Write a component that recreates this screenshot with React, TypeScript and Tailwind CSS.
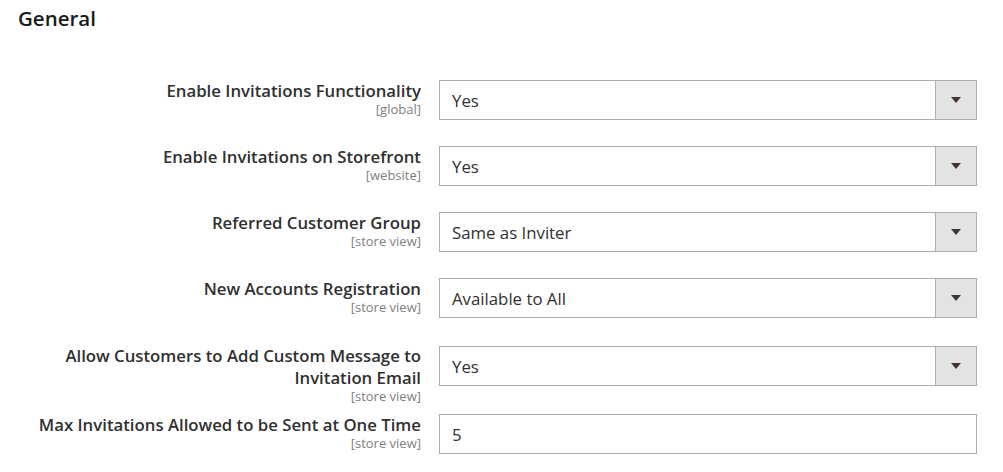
import React from "react";

type Row = { label: string[]; scope: string; value: string; select: boolean; mb: string };

const rows: Row[] = [
  { label: ["Enable Invitations Functionality"], scope: "[global]", value: "Yes", select: true, mb: "mb-[26px]" },
  { label: ["Enable Invitations on Storefront"], scope: "[website]", value: "Yes", select: true, mb: "mb-[26px]" },
  { label: ["Referred Customer Group"], scope: "[store view]", value: "Same as Inviter", select: true, mb: "mb-[26px]" },
  { label: ["New Accounts Registration"], scope: "[store view]", value: "Available to All", select: true, mb: "mb-[28px]" },
  { label: ["Allow Customers to Add Custom Message to", "Invitation Email"], scope: "[store view]", value: "Yes", select: true, mb: "mb-[11px]" },
  { label: ["Max Invitations Allowed to be Sent at One Time"], scope: "[store view]", value: "5", select: false, mb: "" },
];

function Field({ row }: { row: Row }) {
  const multi = row.label.length > 1;
  return (
    <div className={`flex items-start gap-[18px] ${row.mb}`}>
      <div className={`w-[421px] shrink-0 text-right ${multi ? "-mt-[1px]" : ""}`}>
        {row.label.map((l, i) => (
          <div key={i} className="text-[16.75px] leading-[22px] font-semibold text-[#303030]">
            {l}
          </div>
        ))}
        <div className="text-[13px] leading-[14px] text-[#808080]">{row.scope}</div>
      </div>
      <div className="w-[538px] h-[40px] border border-[#adadad] bg-white flex items-stretch">
        <div className="flex-1 flex items-center pl-[12px] pt-[1px] text-[16.8px] text-[#303030]">{row.value}</div>
        {row.select && (
          <div className="w-[41px] bg-[#e3e3e3] border-l border-[#adadad] flex items-center justify-center">
            <svg width="10" height="6" viewBox="0 0 10 6">
              <path d="M0 0 L10 0 L5 6 Z" fill="#41362f" />
            </svg>
          </div>
        )}
      </div>
    </div>
  );
}

export default function App() {
  return (
    <div className="w-[1003px] h-[472px] bg-white overflow-hidden" style={{ fontFamily: '"Open Sans", sans-serif' }}>
      <div className="pl-[18px] pt-[6px] text-[20.5px] leading-[24px] font-semibold text-[#1a1a1a]">General</div>
      <div className="pt-[50px]">
        {rows.map((r, i) => (
          <Field key={i} row={r} />
        ))}
      </div>
    </div>
  );
}
